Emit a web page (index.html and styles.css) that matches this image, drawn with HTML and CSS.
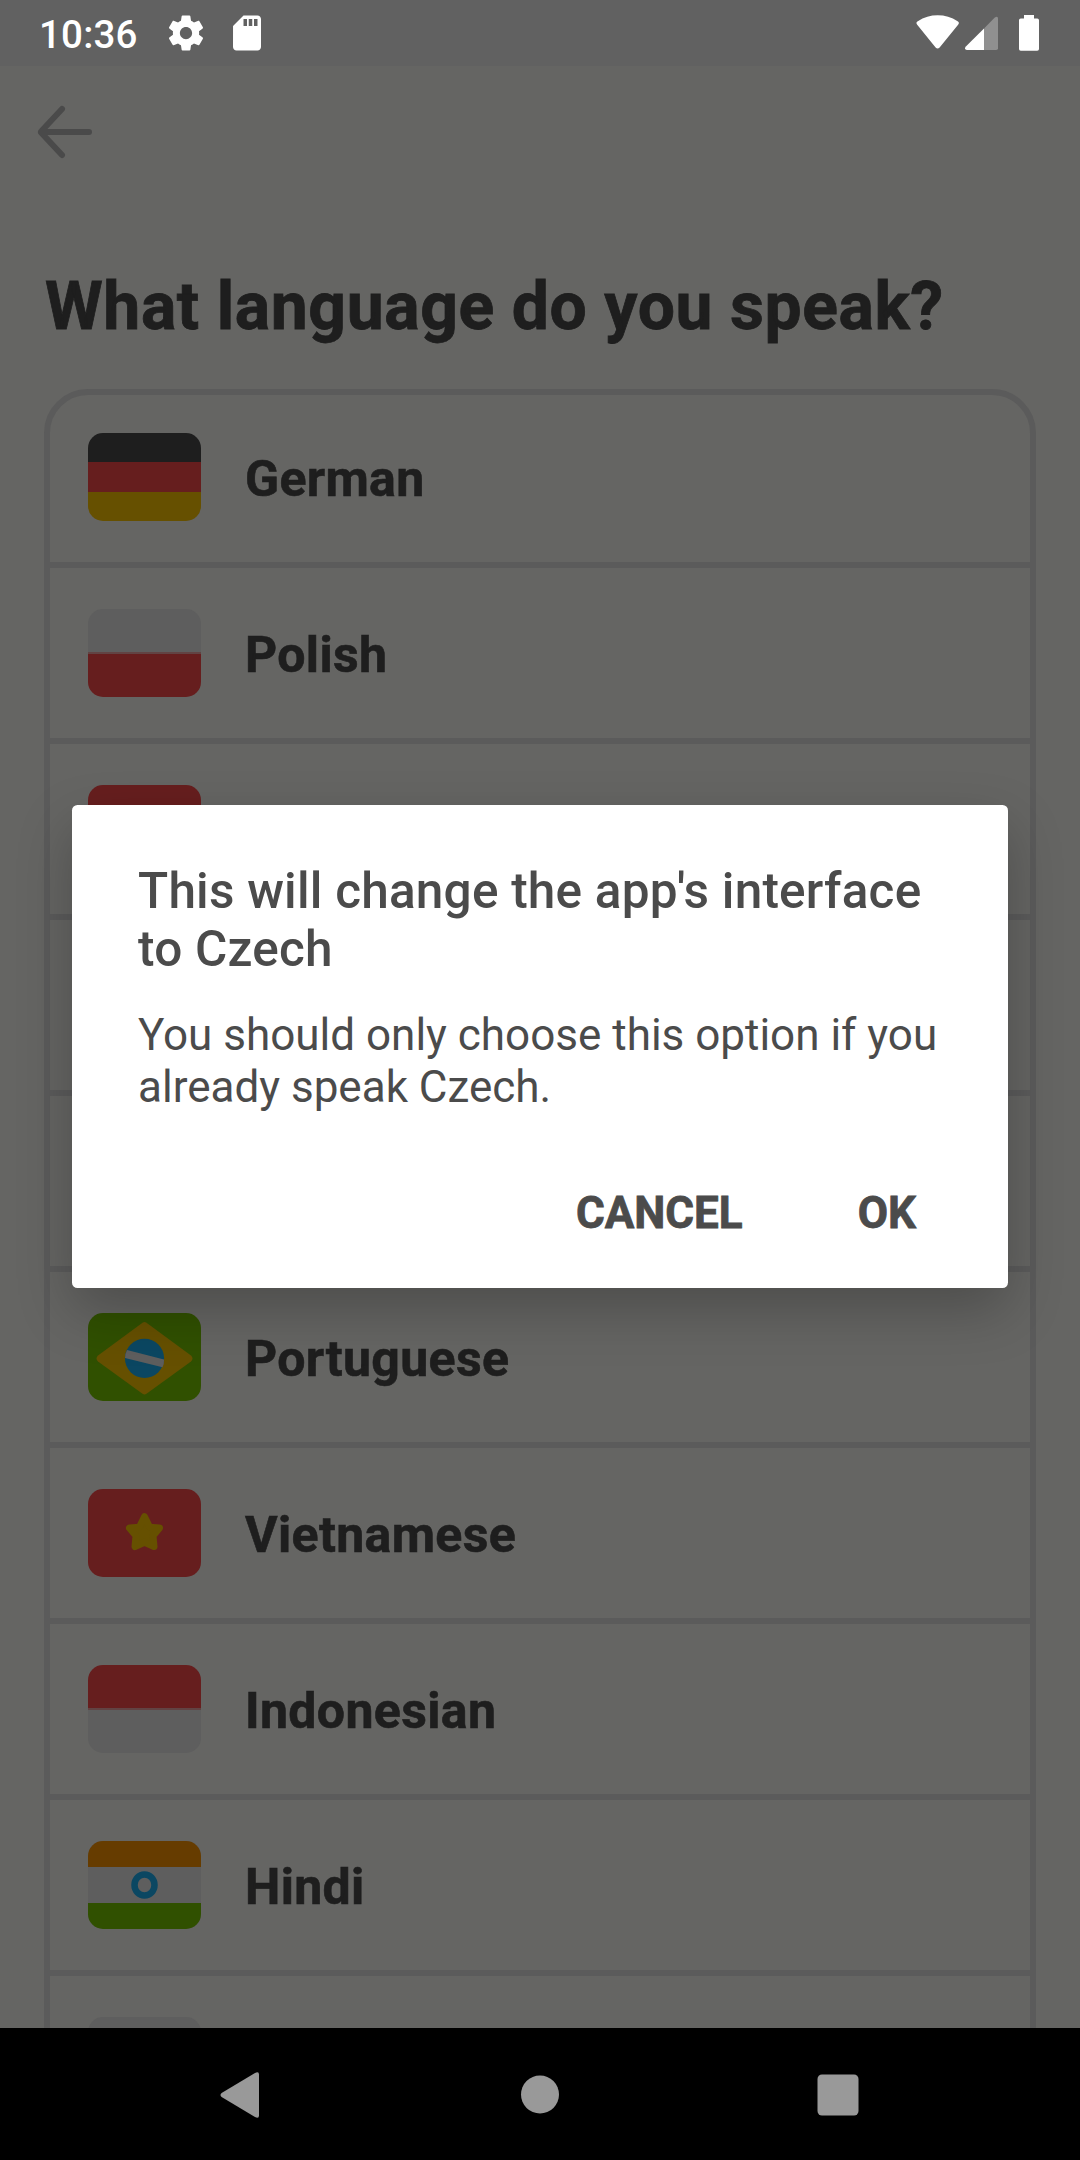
FILE: index.html
```html
<!DOCTYPE html>
<html lang="en">
<head>
<meta charset="utf-8">
<title>What language do you speak?</title>
<link rel="stylesheet" href="styles.css">
</head>
<body>
<div class="screen">
  <header class="status">
    <span class="clock">10:36</span>
    <svg class="ic-gear" width="42" height="42" viewBox="0 0 24 24"><path fill="#fff" d="M19.43 12.98c.04-.32.07-.64.07-.98s-.03-.66-.07-.98l2.11-1.65c.19-.15.24-.42.12-.64l-2-3.46c-.12-.22-.39-.3-.61-.22l-2.49 1c-.52-.4-1.08-.73-1.69-.98l-.38-2.65C14.46 2.18 14.25 2 14 2h-4c-.25 0-.46.18-.49.42l-.38 2.65c-.61.25-1.17.59-1.69.98l-2.49-1c-.23-.09-.49 0-.61.22l-2 3.46c-.13.22-.07.49.12.64l2.11 1.65c-.04.32-.07.65-.07.98s.03.66.07.98l-2.11 1.65c-.19.15-.24.42-.12.64l2 3.46c.12.22.39.3.61.22l2.49-1c.52.4 1.08.73 1.69.98l.38 2.65c.03.24.24.42.49.42h4c.25 0 .46-.18.49-.42l.38-2.65c.61-.25 1.17-.59 1.69-.98l2.49 1c.23.09.49 0 .61-.22l2-3.46c.12-.22.07-.49-.12-.64l-2.11-1.65zM12 15.5c-1.93 0-3.5-1.57-3.5-3.5s1.57-3.5 3.5-3.5 3.5 1.57 3.5 3.5-1.57 3.5-3.5 3.5z"/></svg>
    <svg class="ic-card" width="42" height="42" viewBox="0 0 24 24"><path fill="#fff" d="M18 2h-8L4.02 8 4 20c0 1.1.9 2 2 2h12c1.1 0 2-.9 2-2V4c0-1.1-.9-2-2-2zm-6 6h-2V4h2v4zm3 0h-2V4h2v4zm3 0h-2V4h2v4z"/></svg>
    <svg class="ic-system" width="124" height="38" viewBox="916 14 124 38">
      <path fill="#fff" d="M917.2 24.8Q915.4 22.6 917.8 21.2Q927 15.3 937.7 15.3T957.6 21.2Q959.9 22.6 958.1 24.8L939.6 47.4Q937.6 49.6 935.6 47.4Z"/>
      <path fill="#909090" d="M984 28.4L994.8 17.5Q998 15.5 998 18.5V48.2Q998 50 996.2 50H984Z"/>
      <path fill="#fff" d="M984 28.4V50H966.8Q963.8 49.3 965.6 46.8Z"/>
      <path fill="#fff" d="M1024 15h10v3.5h3.2q1.8 0 1.8 1.8v28.700q0 1.800-1.800 1.800h-16.400q-1.800 0-1.800-1.800V20.300q0-1.800 1.800-1.800h3.200z"/>
    </svg>
  </header>

  <main class="page">
    <svg class="back" width="56" height="56" viewBox="0 0 56 56"><path d="M26 5L5.500 27Q4.500 28 5.500 29L26 51M6 28H53" fill="none" stroke="#4a4a4a" stroke-width="6" stroke-linecap="round" stroke-linejoin="round"/></svg>
    <h1 class="heading">What language do you speak?</h1>

    <ul class="list">
      <li class="row">
        <svg class="flag" viewBox="0 0 113 88"><path fill="#1e1e1e" d="M0 0h113v29H0z"/><path fill="#661e1e" d="M0 29h113v30H0z"/><path fill="#665000" d="M0 59h113v29H0z"/></svg>
        <span class="name">German</span>
      </li>
      <li class="row">
        <svg class="flag" viewBox="0 0 113 88"><path fill="#5e5e5e" d="M0 0h113v44H0z"/><path fill="#661e1e" d="M0 44h113v44H0z"/><path fill="#624343" d="M0 43h113v2H0z"/></svg>
        <span class="name">Polish</span>
      </li>
      <li class="row">
        <svg class="flag" viewBox="0 0 113 88"><path fill="#661e1e" d="M0 0h113v88H0z"/></svg>
      </li>
      <li class="row"></li>
      <li class="row"></li>
      <li class="row">
        <svg class="flag" viewBox="0 0 113 88"><path fill="#305000" d="M0 0h113v88H0z"/><path fill="#665000" d="M54.500 9.700Q56.500 8.300 58.500 9.700L103 42.500Q106 45.500 103 48.500L58.500 80.800Q56.500 82.200 54.500 80.800L10 48.500Q7 45.500 10 42.500Z"/><circle cx="56.500" cy="45.300" r="19.600" fill="#0b4762"/><path fill="#5e5e5e" d="M39 37L76 46.500Q76.300 51 74.500 54.300L37 45Q37.300 40 39 37Z"/></svg>
        <span class="name">Portuguese</span>
      </li>
      <li class="row">
        <svg class="flag" viewBox="0 0 113 88"><path fill="#661e1e" d="M0 0h113v88H0z"/><path fill="#665000" stroke="#665000" stroke-width="7" stroke-linejoin="round" d="M56.500 27.700L61.700 38.200L71.500 39L65 46.700L66 57.500L56.500 53.200L47 57.500L48 46.700L41.500 39L51.300 38.200Z"/></svg>
        <span class="name">Vietnamese</span>
      </li>
      <li class="row">
        <svg class="flag" viewBox="0 0 113 88"><path fill="#661e1e" d="M0 0h113v44H0z"/><path fill="#5e5e5e" d="M0 44h113v44H0z"/><path fill="#624343" d="M0 43h113v2H0z"/></svg>
        <span class="name">Indonesian</span>
      </li>
      <li class="row">
        <svg class="flag" viewBox="0 0 113 88"><path fill="#5e5e5e" d="M0 0h113v88H0z"/><path fill="#663c00" d="M0 0h113v26H0z"/><path fill="#305000" d="M0 62h113v26H0z"/><ellipse cx="56.500" cy="44" rx="10" ry="10.500" fill="none" stroke="#0b4762" stroke-width="6.500"/></svg>
        <span class="name">Hindi</span>
      </li>
      <li class="row">
        <svg class="flag" viewBox="0 0 113 88"><path fill="#5e5e5e" d="M0 0h113v88H0z"/></svg>
      </li>
    </ul>
  </main>

  <nav class="navbar">
    <svg width="42" height="50" viewBox="0 0 42 50"><path fill="#999" d="M2.600 23L36 3Q40 1 40 4.500V45.500Q40 49 36 47L2.600 27Q.4 25 2.600 23Z"/></svg>
    <svg width="40" height="40" viewBox="0 0 40 40"><circle cx="21" cy="19.500" r="19" fill="#999"/></svg>
    <svg width="42" height="42" viewBox="0 0 42 42"><rect x=".5" y=".5" width="41" height="41" rx="4.500" fill="#999"/></svg>
  </nav>

  <section class="dialog">
    <h2 class="dialog-title">This will change the app's interface<br>to Czech</h2>
    <p class="dialog-text">You should only choose this option if you<br>already speak Czech.</p>
    <div class="actions"><button class="btn">CANCEL</button><button class="btn">OK</button></div>
  </section>
</div>
</body>
</html>
```
FILE: styles.css
```css
* { box-sizing: border-box; }
body { margin: 0; font-family: Roboto, sans-serif; }
.screen {
  position: relative;
  display: flex;
  flex-direction: column;
  width: 1080px;
  height: 2160px;
  overflow: hidden;
  background: #656563;
}
.status {
  display: flex;
  align-items: center;
  flex: none;
  height: 66px;
  padding: 0 40px 0 39px;
  background: #616161;
}
.clock {
  width: 126px;
  color: #fff;
  font-size: 38.5px;
  font-weight: 500;
  line-height: 46px;
  letter-spacing: .2px;
  padding-top: 4px;
}
.ic-card { margin-left: 19px; }
.ic-system { margin-left: auto; }
.page {
  flex: 1;
  min-height: 0;
  overflow: hidden;
  padding: 38px 44px 0;
}
.back { display: block; margin-left: -8px; }
.heading {
  margin: 108px 0 0 1px;
  height: 121px;
  color: #1e1e1e;
  font-size: 66px;
  font-weight: 700;
  line-height: 78px;
  letter-spacing: .6px;
  -webkit-text-stroke: .8px #1e1e1e;
  white-space: nowrap;
}
.list {
  margin: 0;
  padding: 0;
  list-style: none;
  border: 6px solid #5b5b5b;
  border-radius: 44px 44px 0 0;
}
.row {
  display: flex;
  align-items: center;
  gap: 44px;
  height: 176px;
  padding-left: 38px;
  border-bottom: 6px solid #5b5b5b;
}
.row:first-child { height: 173px; padding-bottom: 3px; }
.flag {
  flex: none;
  width: 113px;
  height: 88px;
  border-radius: 15px;
}
.name {
  padding-top: 3px;
  color: #1e1e1e;
  font-size: 50px;
  font-weight: 700;
  line-height: 60px;
  letter-spacing: .35px;
  -webkit-text-stroke: .6px #1e1e1e;
}
.navbar {
  display: flex;
  align-items: center;
  justify-content: space-between;
  flex: none;
  height: 132px;
  padding: 1px 221px 0 219px;
  background: #000;
}
.dialog {
  position: absolute;
  left: 72px;
  top: 805px;
  width: 936px;
  height: 483px;
  padding: 57px 66px 0;
  border-radius: 5.5px;
  background: #fff;
  color: #4b4b4b;
  box-shadow: 0 22px 55px rgba(0, 0, 0, .24);
  white-space: nowrap;
}
.dialog-title {
  margin: 0 0 31px;
  font-size: 49.5px;
  font-weight: 500;
  line-height: 58px;
  letter-spacing: .22px;
}
.dialog-text {
  margin: 0;
  font-size: 44px;
  line-height: 52px;
}
.actions {
  display: flex;
  justify-content: flex-end;
  gap: 115px;
  margin-top: 74px;
  padding-right: 26px;
}
.btn {
  padding: 0;
  border: 0;
  background: none;
  color: #4b4b4b;
  font: 700 44px/52px Roboto, sans-serif;
  -webkit-text-stroke: .8px #4b4b4b;
}
```
